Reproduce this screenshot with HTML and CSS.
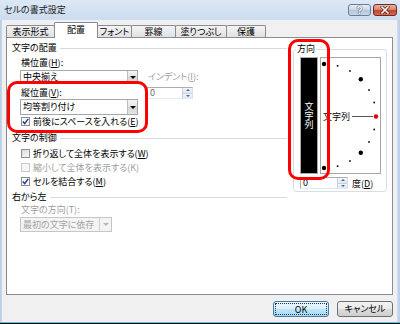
FILE: index.html
```html
<!DOCTYPE html>
<html lang="ja">
    <head>
        <meta charset="UTF-8">
        <title>セルの書式設定</title>
        <link rel="stylesheet" href="styles.css">
    </head>
    <body>
        <div class="window">
            <div class="titlebar">
                <div class="title">セルの書式設定</div>
                <div class="caption">
                    <div class="help">?</div>
                    <div class="close">
                        <svg width="10" height="8" viewBox="0 0 10 8">
                            <path d="M2 1 L8 7 M8 1 L2 7" stroke="#5a1d16" stroke-width="3" stroke-linecap="square"/>
                            <path d="M2 1 L8 7 M8 1 L2 7" stroke="#fff" stroke-width="1.6" stroke-linecap="square"/>
                        </svg>
                    </div>
                </div>
            </div>

            <div class="client">
                <div class="tabs">
                    <div class="tab t1">表示形式</div>
                    <div class="tab t2 active">配置</div>
                    <div class="tab t3">フォント</div>
                    <div class="tab t4">罫線</div>
                    <div class="tab t5">塗りつぶし</div>
                    <div class="tab t6">保護</div>
                </div>

                <div class="panel">
                    <div class="left">
                        <div class="group-title">文字の配置</div>
                        <div class="align">
                            <div class="label first">横位置(<u>H</u>):</div>
                            <div></div>
                            <div class="combo c1"><span class="text">中央揃え</span><span class="arrow"></span></div>
                            <div class="label disabled indent-label">インデント(<u>I</u>):</div>
                            <div class="label second">縦位置(<u>V</u>):</div>
                            <div class="spin s-indent">
                                <span class="val">0</span>
                                <span class="updown"><i class="up"></i><i class="down"></i></span>
                            </div>
                            <div class="combo c2"><span class="text">均等割り付け</span><span class="arrow"></span></div>
                            <div></div>
                        </div>
                        <div class="check checked row-e">
                            <span class="box"><svg width="7" height="7" viewBox="0 0 7 7"><path d="M0.8 3.6 L2.7 5.6 L6.2 0.8" fill="none" stroke="#1f3a8c" stroke-width="1.4"/></svg></span>
                            <span>前後にスペースを入れる(<u>E</u>)</span>
                        </div>

                        <div class="group-title g2">文字の制御</div>
                        <div class="check row-w">
                            <span class="box"></span>
                            <span>折り返して全体を表示する(<u>W</u>)</span>
                        </div>
                        <div class="check disabled row-k">
                            <span class="box"></span>
                            <span>縮小して全体を表示する(K)</span>
                        </div>
                        <div class="check checked row-m">
                            <span class="box"><svg width="7" height="7" viewBox="0 0 7 7"><path d="M0.8 3.6 L2.7 5.6 L6.2 0.8" fill="none" stroke="#1f3a8c" stroke-width="1.4"/></svg></span>
                            <span>セルを結合する(<u>M</u>)</span>
                        </div>

                        <div class="group-title g3">右から左</div>
                        <div class="label disabled dir-label">文字の方向(T):</div>
                        <div class="combo c3 off"><span class="text">最初の文字に依存</span><span class="arrow"></span></div>
                    </div>

                    <fieldset class="orient">
                        <legend>方向</legend>
                        <div class="orient-main">
                            <div class="vbox"><span>文字列</span></div>
                            <div class="dial">
                                <svg width="59" height="115" viewBox="0 0 59 115">
                                    <text x="2" y="61.5" class="dial-text">文字列</text>
                                    <line x1="31" y1="58.5" x2="52" y2="58.5" stroke="#555" stroke-width="1"/>
                                    <circle cx="3" cy="6" r="2.2"/>
                                    <rect x="15.8" y="7" width="1.6" height="1.6"/>
                                    <rect x="28.2" y="12.2" width="1.6" height="1.6"/>
                                    <circle cx="39.8" cy="21.2" r="2.2"/>
                                    <rect x="47.2" y="31.2" width="1.6" height="1.6"/>
                                    <rect x="52.4" y="43.7" width="1.6" height="1.6"/>
                                    <circle cx="55" cy="58.5" r="2.2" fill="#e00000"/>
                                    <rect x="52.4" y="70.7" width="1.6" height="1.6"/>
                                    <rect x="47.2" y="83.2" width="1.6" height="1.6"/>
                                    <circle cx="39.8" cy="94.8" r="2.2"/>
                                    <rect x="28.2" y="102.2" width="1.6" height="1.6"/>
                                    <rect x="15.8" y="107.4" width="1.6" height="1.6"/>
                                    <circle cx="3" cy="110" r="2.2"/>
                                </svg>
                            </div>
                        </div>
                        <div class="degree">
                            <div class="spin s-deg">
                                <span class="val">0</span>
                                <span class="updown"><i class="up"></i><i class="down"></i></span>
                            </div>
                            <span>度(<u>D</u>)</span>
                        </div>
                    </fieldset>
                </div>

                <div class="footer">
                    <div class="button default"><span>OK</span></div>
                    <div class="button">キャンセル</div>
                </div>
            </div>

            <!-- 注目枠 -->
            <div class="mark mark-v"></div>
            <div class="mark mark-o"></div>
        </div>
    </body>
</html>
```

FILE: styles.css
```css
* {
    box-sizing: border-box;
}

body {
    margin: 0;
    width: 400px;
    height: 324px;
    overflow: hidden;
    background: #000;
    font-family: "Noto Sans CJK JP", "Noto Sans", sans-serif;
    font-size: 9px;
    font-feature-settings: "palt";
    color: #000;
}

u {
    text-decoration: underline;
    text-underline-offset: 1px;
}

.window {
    position: relative;
    width: 400px;
    height: 323px;
    display: flex;
    flex-direction: column;
    background: linear-gradient(to right, #b7cce4, #d0dff0 3px, #d0dff0 397px, #b7cce4);
    border-bottom: 1px solid #45c8f2;
}

/* タイトルバー */
.titlebar {
    flex: none;
    height: 20px;
    display: flex;
    justify-content: space-between;
    background: linear-gradient(#dce8f5, #cbdcef);
}

.title {
    padding-left: 4px;
    line-height: 20px;
    color: #1c1c1c;
}

.caption {
    display: flex;
    gap: 2px;
    padding: 4px 3px 0 0;
}

.help,
.close {
    width: 23px;
    height: 12px;
    border-radius: 3px;
    display: flex;
    align-items: center;
    justify-content: center;
}

.help {
    border: 1px solid #6b7d95;
    background: linear-gradient(#e8eef6, #c6d5e7 50%, #b3c6de 50%, #c5d6ea);
    color: #fff;
    font-family: "Liberation Sans", sans-serif;
    font-weight: bold;
    font-size: 10px;
    text-shadow: 0 0 1px #2d3b50, 0 0 1px #2d3b50;
}

.close {
    width: 24px;
    border: 1px solid #6d2b22;
    background: linear-gradient(#e9b3a4, #d7806c 50%, #c4412c 50%, #d36a52);
}

/* クライアント領域 */
.client {
    flex: 1;
    margin: 0 3px 0 2px;
    padding-top: 2px;
    background: #f0f0f0;
}

.tabs {
    height: 15px;
    padding-left: 4px;
    display: flex;
    align-items: flex-end;
}

.tab {
    height: 12px;
    margin-left: -1px;
    border: 1px solid #898c95;
    border-bottom: none;
    border-radius: 2px 2px 0 0;
    background: linear-gradient(#f4f4f4, #e1e1e1);
    text-align: center;
    line-height: 11px;
    white-space: nowrap;
}

.tab.active {
    position: relative;
    z-index: 1;
    height: 16px;
    margin-bottom: -1px;
    background: #fff;
    line-height: 13px;
}

.t1 { width: 49px; margin-left: 0; }
.t2 { width: 44px; }
.t3 { width: 35px; }
.t4 { width: 45px; }
.t5 { width: 52px; }
.t6 { width: 40px; }

.panel {
    height: 258px;
    margin: 0 4px;
    padding: 4px 0 0 5px;
    border: 1px solid #898c95;
    background: #fff;
    display: flex;
    align-items: flex-start;
}

.left {
    width: 275px;
}

.group-title {
    height: 12px;
    line-height: 12px;
    display: flex;
    align-items: center;
    gap: 3px;
}

.group-title::after {
    content: "";
    flex: 1;
    border-top: 1px solid #d5dbe0;
    margin-top: 1px;
}

.g2 { margin-top: 5px; }
.g3 { margin-top: 4px; }

.label {
    height: 12px;
    line-height: 12px;
    padding-left: 1px;
    white-space: nowrap;
}

.disabled {
    color: #9d9d9d;
}

.align {
    margin-left: 8px;
    display: grid;
    grid-template-columns: 118px 46px;
    column-gap: 9px;
}

.label.first { margin-top: 3px; }
.label.second { margin-top: 3px; }
.indent-label { align-self: center; }

.combo {
    display: flex;
    height: 14px;
    border: 1px solid #a2a7ae;
    background: #fff;
}

.combo .text {
    flex: 1;
    padding-left: 2px;
    line-height: 12px;
    white-space: nowrap;
}

.combo .arrow {
    width: 10px;
    border-left: 1px solid #b9bdc2;
    background: linear-gradient(#f6f6f6, #e3e3e3 50%, #d6d6d6 50%, #e4e4e4);
    display: flex;
    align-items: center;
    justify-content: center;
}

.combo .arrow::before {
    content: "";
    border-left: 3px solid transparent;
    border-right: 3px solid transparent;
    border-top: 3px solid #000;
}

.c1 { margin-top: 1px; }
.c2 { height: 16px; }
.c2 .text { line-height: 14px; }

.c3 {
    width: 92px;
    height: 15px;
    margin: 1px 0 0 8px;
}

.combo.off {
    background: #f4f4f4;
    border-color: #c3c6ca;
    color: #a3a3a3;
}

.combo.off .text { line-height: 13px; }

.combo.off .arrow {
    width: 12px;
    background: #f4f4f4;
    border-left-color: #d0d0d0;
}

.combo.off .arrow::before {
    border-top-color: #b5b5b5;
}

.dir-label {
    margin: 1px 0 0 8px;
}

/* スピンボックス */
.spin {
    display: flex;
    height: 12px;
    border: 1px solid #abadb3;
    border-right-color: #dbdfe6;
    border-bottom-color: #e3e9ef;
    background: #fff;
}

.spin .val {
    flex: 1;
    padding-left: 2px;
    line-height: 10px;
}

.updown {
    width: 10px;
    display: flex;
    flex-direction: column;
    border-left: 1px solid #c8d1de;
}

.updown i {
    flex: 1;
    display: flex;
    align-items: center;
    justify-content: center;
    background: linear-gradient(#f4f7fb, #dfe7f1);
}

.updown .up { border-bottom: 1px solid #c8d1de; }

.updown .up::before {
    content: "";
    border-left: 2px solid transparent;
    border-right: 2px solid transparent;
    border-bottom: 2px solid #4a6796;
}

.updown .down::before {
    content: "";
    border-left: 2px solid transparent;
    border-right: 2px solid transparent;
    border-top: 2px solid #4a6796;
}

.s-indent {
    margin-top: 3px;
    color: #6d6d6d;
}

/* チェックボックス */
.check {
    height: 12px;
    margin-left: 9px;
    display: flex;
    align-items: center;
    gap: 3px;
    white-space: nowrap;
}

.box {
    width: 9px;
    height: 9px;
    border: 1px solid #8e8f8f;
    background: linear-gradient(135deg, #dcdcdc, #f8f8f8);
    display: flex;
    align-items: center;
    justify-content: center;
}

.checked .box {
    background: #f6f6f6;
}

.check.disabled .box {
    border-color: #c9c9c9;
    background: #f6f6f6;
}

.row-w { margin-top: 3px; }
.row-k { margin-top: 2px; }
.row-m { margin-top: 2px; }

/* 方向 */
.orient {
    width: 94px;
    margin: 1px 0 0 6px;
    padding: 2px 4px 2px 6px;
    border: 1px solid #d5dfe5;
    border-radius: 3px;
    min-width: 0;
}

.orient legend {
    height: 12px;
    line-height: 12px;
    padding: 0 1px;
    margin-left: -4px;
}

.orient-main {
    display: flex;
    gap: 2px;
}

.vbox {
    width: 18px;
    height: 117px;
    border: 1px solid #a9a9a9;
    background: #000;
    display: flex;
    align-items: center;
    justify-content: center;
}

.vbox span {
    writing-mode: vertical-rl;
    text-orientation: upright;
    color: #fff;
    line-height: 9px;
}

.dial {
    width: 61px;
    height: 117px;
    border: 1px solid #a5a5a5;
    background: #fff;
}

.dial svg {
    display: block;
}

.dial-text {
    font-family: "Noto Sans CJK JP", sans-serif;
    font-size: 9px;
    fill: #000;
}

.degree {
    margin-top: 3px;
    display: flex;
    align-items: center;
    gap: 4px;
    height: 12px;
}

.s-deg {
    width: 48px;
}

/* ボタン */
.footer {
    margin-top: 6px;
    padding-right: 4px;
    display: flex;
    justify-content: flex-end;
    gap: 8px;
}

.button {
    width: 56px;
    height: 16px;
    border: 1px solid #707070;
    border-radius: 3px;
    background: linear-gradient(#f2f2f2, #ebebeb 50%, #dddddd 50%, #cfcfcf);
    display: flex;
    align-items: center;
    justify-content: center;
    line-height: 12px;
}

.button.default {
    border-color: #3c7fb1;
    background: linear-gradient(#eaf6fd, #d9f0fc 50%, #bee6fd 50%, #a7d9f5);
    padding: 1px;
}

.button.default span {
    width: 100%;
    height: 100%;
    border: 1px dotted #333;
    text-align: center;
    line-height: 11px;
}

/* 注目枠 */
.mark {
    position: absolute;
    border: 3px solid #f00;
    border-radius: 10px;
}

.mark-v {
    left: 7px;
    top: 81px;
    width: 141px;
    height: 52px;
}

.mark-o {
    left: 288px;
    top: 39px;
    width: 42px;
    height: 141px;
}
```
